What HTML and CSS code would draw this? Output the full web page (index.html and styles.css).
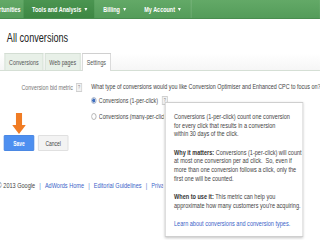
FILE: index.html
```html
<!DOCTYPE html>
<html>
<head>
<meta charset="utf-8">
<link rel="stylesheet" href="styles.css">
</head>
<body>
<div class="page">
  <nav class="topnav">
    <span class="nav-item nav-first">Opportunities</span>
    <span class="nav-item nav-active">Tools and Analysis <i class="caret"></i></span>
    <span class="nav-item">Billing <i class="caret"></i></span>
    <span class="nav-item nav-last">My Account <i class="caret"></i></span>
  </nav>

  <h1 class="title">All conversions</h1>

  <div class="tabbar">
    <span class="tab">Conversions</span>
    <span class="tab">Web pages</span>
    <span class="tab tab-active">Settings</span>
  </div>

  <div class="settings">
    <div class="label-col">
      <span>Conversion bid metric</span>
      <span class="help">?</span>
    </div>
    <div class="content">
      <div class="question">What type of conversions would you like Conversion Optimiser and Enhanced CPC to focus on?</div>
      <div class="option option-first">
        <span class="radio radio-on"></span>
        <span>Conversions (1-per-click)</span>
        <span class="help help-gap">?</span>
      </div>
      <div class="option option-clip">
        <span class="radio"></span>
        <span class="clip-text">Conversions (many-per-click)</span>
      </div>
    </div>
  </div>

  <div class="buttons">
    <span class="btn btn-save">Save</span>
    <span class="btn btn-cancel">Cancel</span>
  </div>

  <footer class="footer">
    <span>© 2013 Google</span>
    <span class="sep">|</span>
    <a class="flink">AdWords Home</a>
    <span class="sep">|</span>
    <a class="flink">Editorial Guidelines</a>
    <span class="sep">|</span>
    <a class="flink clip-text">Privacy Policy</a>
  </footer>

  <svg class="pointer" width="18" height="21" viewBox="0 0 18 21">
    <rect x="5" y="0" width="8" height="12" fill="#f07c24"/>
    <polygon points="0,12 18,12 9,21" fill="#f07c24"/>
  </svg>

  <div class="tooltip">
    <p>Conversions (1-per-click) count one conversion<br>for every click that results in a conversion<br>within 30 days of the click.</p>
    <p><b>Why it matters:</b> Conversions (1-per-click) will count<br>at most one conversion per ad click.&nbsp; So, even if<br>more than one conversion follows a click, only the<br>first one will be counted.</p>
    <p><b>When to use it:</b> This metric can help you<br>approximate how many customers you're acquiring.</p>
    <p class="tip-last"><a class="tlink">Learn about conversions and conversion types.</a></p>
  </div>
</div>
</body>
</html>
```
FILE: styles.css
```css
html, body {
  margin: 0;
  padding: 0;
  width: 320px;
  height: 240px;
  overflow: hidden;
  background: #fff;
}
.page {
  position: relative;
  width: 421px;
  height: 240px;
  transform: scaleX(0.76);
  transform-origin: 0 0;
  font-family: "Liberation Sans", Arial, sans-serif;
  color: #333;
  overflow: hidden;
}
.topnav {
  display: flex;
  height: 18px;
  background: linear-gradient(#63a967, #549c5a);
  border-bottom: 1px solid #4a8d50;
}
.nav-item {
  display: flex;
  align-items: center;
  padding: 0 12px;
  color: #fff;
  font-weight: bold;
  font-size: 7.2px;
  white-space: nowrap;
}
.nav-first {
  margin-left: -20px;
  padding-left: 0;
  padding-right: 4px;
}
.nav-active {
  background: linear-gradient(#4b9551, #3d8743);
  padding-left: 11px;
  padding-right: 9px;
}
.nav-last {
  padding-right: 13px;
  border-right: 1px solid rgba(255,255,255,0.18);
}
.caret {
  display: inline-block;
  width: 0;
  height: 0;
  margin-left: 4px;
  border-left: 2px solid transparent;
  border-right: 2px solid transparent;
  border-top: 3px solid #fff;
}
.title {
  margin: 12px 0 0 9px;
  font-size: 12px;
  line-height: 14px;
  font-weight: normal;
  color: #222;
}
.tabbar {
  display: flex;
  gap: 2px;
  margin-top: 8px;
  padding-left: 6px;
  height: 17px;
  border-bottom: 1px solid #d5dfd5;
  background: linear-gradient(#fff, #f6f6f6);
}
.tab {
  display: flex;
  align-items: center;
  height: 17px;
  box-sizing: border-box;
  padding: 0 5px;
  border: 1px solid #d3ddd3;
  border-bottom: none;
  background: #e8f0e8;
  font-size: 7px;
  color: #555;
}
.tab-active {
  background: #fff;
  height: 18px;
  border-color: #d0d0d0;
}
.settings {
  display: flex;
  margin-top: 12px;
}
.label-col {
  flex: none;
  width: 108px;
  display: flex;
  justify-content: flex-end;
  align-items: center;
  gap: 4px;
  height: 8px;
  font-size: 7px;
  color: #777;
}
.content {
  flex: none;
  margin-left: 12px;
  font-size: 7px;
  color: #444;
}
.question {
  font-size: 7.1px;
  line-height: 8px;
  white-space: nowrap;
}
.option {
  display: flex;
  align-items: center;
  height: 8px;
  margin-top: 8px;
  white-space: nowrap;
}
.option-first {
  margin-top: 5px;
}
.option-clip {
  width: 96px;
  overflow: hidden;
}
.clip-text {
  min-width: 0;
  overflow: hidden;
}
.radio {
  flex: none;
  width: 5px;
  height: 5px;
  border-radius: 50%;
  border: 1px solid #aaa;
  margin-right: 3px;
  background: #fff;
}
.radio-on {
  background: radial-gradient(circle, #3f6fc0 55%, #cfd9ea 60%);
  border-color: #9aa9c4;
}
.help {
  display: inline-flex;
  align-items: center;
  justify-content: center;
  width: 6px;
  height: 7px;
  border: 1px solid #d0d0d0;
  background: #f2f2f2;
  font-size: 5px;
  color: #888;
}
.help-gap {
  margin-left: 5px;
}
.buttons {
  display: flex;
  gap: 5px;
  margin: 15px 0 0 5px;
}
.btn {
  display: flex;
  align-items: center;
  justify-content: center;
  height: 16px;
  box-sizing: border-box;
  font-size: 6.5px;
  border-radius: 1px;
}
.btn-save {
  width: 40px;
  background: #4d8ff0;
  border: 1px solid #3f7fe0;
  color: #fff;
  font-weight: bold;
}
.btn-cancel {
  width: 40px;
  background: #f3f3f3;
  border: 1px solid #dcdcdc;
  color: #444;
}
.footer {
  display: flex;
  width: 218px;
  overflow: hidden;
  margin: 31px 0 0 -3px;
  font-size: 7.3px;
  line-height: 8px;
  color: #444;
  white-space: nowrap;
}
.sep {
  margin: 0 5.5px;
  color: #5577cc;
}
.flink {
  color: #3a63c8;
}
.pointer {
  position: absolute;
  left: 16px;
  top: 113px;
  width: 18px;
  height: 21px;
}
.tooltip {
  position: absolute;
  left: 217px;
  top: 102px;
  width: 182px;
  height: 135px;
  box-sizing: border-box;
  padding: 10px 6px 9px 11px;
  background: #fff;
  border: 1px solid #cfcfcf;
  box-shadow: 0 1px 3px rgba(0,0,0,0.25);
  font-size: 7.3px;
  line-height: 8.7px;
  color: #444;
  white-space: nowrap;
}
.tooltip p {
  margin: 0 0 9.5px 0;
}
.tooltip b {
  color: #333;
}
.tooltip .tip-last {
  margin: 0;
}
.tlink {
  color: #3a63c8;
}
```
